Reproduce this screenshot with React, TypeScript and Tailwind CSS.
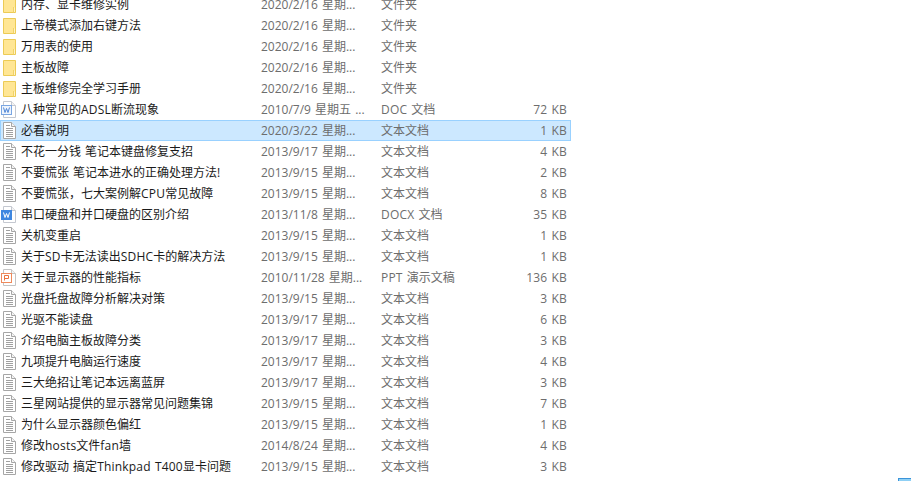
const rows: [string, string, string, string, string][] = [
  ["folder", "内存、显卡维修实例", "2020/2/16 星期...", "文件夹", ""],
  ["folder", "上帝模式添加右键方法", "2020/2/16 星期...", "文件夹", ""],
  ["folder", "万用表的使用", "2020/2/16 星期...", "文件夹", ""],
  ["folder", "主板故障", "2020/2/16 星期...", "文件夹", ""],
  ["folder", "主板维修完全学习手册", "2020/2/16 星期...", "文件夹", ""],
  ["doc", "八种常见的ADSL断流现象", "2010/7/9 星期五 ...", "DOC 文档", "72 KB"],
  ["txt", "必看说明", "2020/3/22 星期...", "文本文档", "1 KB"],
  ["txt", "不花一分钱 笔记本键盘修复支招", "2013/9/17 星期...", "文本文档", "4 KB"],
  ["txt", "不要慌张 笔记本进水的正确处理方法!", "2013/9/15 星期...", "文本文档", "2 KB"],
  ["txt", "不要慌张，七大案例解CPU常见故障", "2013/9/15 星期...", "文本文档", "8 KB"],
  ["docx", "串口硬盘和并口硬盘的区别介绍", "2013/11/8 星期...", "DOCX 文档", "35 KB"],
  ["txt", "关机变重启", "2013/9/15 星期...", "文本文档", "1 KB"],
  ["txt", "关于SD卡无法读出SDHC卡的解决方法", "2013/9/15 星期...", "文本文档", "1 KB"],
  ["ppt", "关于显示器的性能指标", "2010/11/28 星期...", "PPT 演示文稿", "136 KB"],
  ["txt", "光盘托盘故障分析解决对策", "2013/9/15 星期...", "文本文档", "3 KB"],
  ["txt", "光驱不能读盘", "2013/9/17 星期...", "文本文档", "6 KB"],
  ["txt", "介绍电脑主板故障分类", "2013/9/17 星期...", "文本文档", "3 KB"],
  ["txt", "九项提升电脑运行速度", "2013/9/17 星期...", "文本文档", "4 KB"],
  ["txt", "三大绝招让笔记本远离蓝屏", "2013/9/17 星期...", "文本文档", "3 KB"],
  ["txt", "三星网站提供的显示器常见问题集锦", "2013/9/15 星期...", "文本文档", "7 KB"],
  ["txt", "为什么显示器颜色偏红", "2013/9/15 星期...", "文本文档", "1 KB"],
  ["txt", "修改hosts文件fan墙", "2014/8/24 星期...", "文本文档", "4 KB"],
  ["txt", "修改驱动 搞定Thinkpad T400显卡问题", "2013/9/15 星期...", "文本文档", "3 KB"],
];

function Mixed({ text }: { text: string }) {
  const parts = text.split(/([A-Za-z0-9]+)/);
  return (
    <>
      {parts.map((part, i) =>
        /^[A-Za-z0-9]+$/.test(part) ? (
          <span key={i} className="tracking-[0.2px]">
            {part}
          </span>
        ) : (
          <span key={i}>{part}</span>
        ),
      )}
    </>
  );
}

function Page({ stroke, x = 0.5 }: { stroke: string; x?: number }) {
  const r = x + 12;
  return (
    <>
      <path d={`M${x} 0.5H${x + 8}L${r} 4.5V16.5H${x}Z`} fill="#fff" stroke={stroke} />
      <path d={`M${x + 8} 0.5V4.5H${r}`} fill="#f4f4f4" stroke={stroke} />
    </>
  );
}

function FileIcon({ kind }: { kind: string }) {
  if (kind === "folder") {
    return (
      <svg width="13" height="16" viewBox="0 0 13 16" className="ml-[2px]">
        <path d="M0.5 0.5H12.5V15.5H0.5Z" fill="#ffe694" stroke="#eccb55" />
        <path d="M10.5 10V15.5" fill="none" stroke="#f2d266" />
        <path d="M11 10.5H12V15H11Z" fill="#fff3c4" />
      </svg>
    );
  }
  if (kind === "txt") {
    return (
      <svg width="13" height="17" viewBox="0 0 13 17" className="ml-[2px]">
        <Page stroke="#a6a6a6" />
        <path d="M3 3.5H7M3 6.5H10M3 8.5H10M3 10.5H10M3 12.5H10M3 14.5H10" stroke="#a0a0a0" fill="none" />
      </svg>
    );
  }
  if (kind === "ppt") {
    return (
      <svg width="15" height="17" viewBox="0 0 15 17">
        <Page stroke="#c4c4c4" x={2.5} />
        <rect x="0.5" y="4.5" width="10" height="9" fill="#fff" stroke="#ef8a5c" />
        <path d="M3.5 11.5V6.5H7.5V9.5H3.5" fill="none" stroke="#ea7440" />
      </svg>
    );
  }
  const solid = kind === "docx";
  return (
    <svg width="15" height="17" viewBox="0 0 15 17">
      <Page stroke="#c4c8d0" x={2.5} />
      <rect
        x="0.5"
        y="4.5"
        width="10"
        height="9"
        fill={solid ? "#3f87e0" : "#eef4fc"}
        stroke={solid ? "#3f87e0" : "#7aa6e2"}
      />
      <path d="M2.5 6.5L4 11.5L5.5 7.5L7 11.5L8.5 6.5" fill="none" stroke={solid ? "#fff" : "#4f86d6"} />
    </svg>
  );
}

export default function App() {
  return (
    <div
      className="relative h-[481px] w-[911px] overflow-hidden bg-white text-[12px]"
      style={{ fontFamily: '"Open Sans", "Noto Sans CJK SC", sans-serif' }}
    >
      <div className="-mt-[6px] flex w-[571px] flex-col">
        {rows.map(([kind, name, date, type, size]) => {
          const selected = name === "必看说明";
          return (
            <div
              key={name}
              className={
                "flex h-[21px] items-center border leading-[19px] [word-spacing:1px] " +
                (selected ? "border-[#99d1ff] bg-[#cce8ff]" : "border-transparent")
              }
            >
              <div className="flex w-[19px] shrink-0 items-center">
                <FileIcon kind={kind} />
              </div>
              <div className="w-[241px] shrink-0 truncate pl-px text-[#1a1a1a]">
                <Mixed text={name} />
              </div>
              <div className="w-[120px] shrink-0 truncate text-[#6d6d6d]">{date}</div>
              <div className="w-[120px] shrink-0 truncate text-[#6d6d6d]">
                <Mixed text={type} />
              </div>
              <div className="w-[66px] shrink-0 text-right text-[#6d6d6d]">
                <Mixed text={size} />
              </div>
            </div>
          );
        })}
      </div>
      <div className="absolute bottom-0 right-0 h-[3px] w-[13px] border-l border-t border-[#3b94d9] bg-[#8fd0f5]" />
    </div>
  );
}
